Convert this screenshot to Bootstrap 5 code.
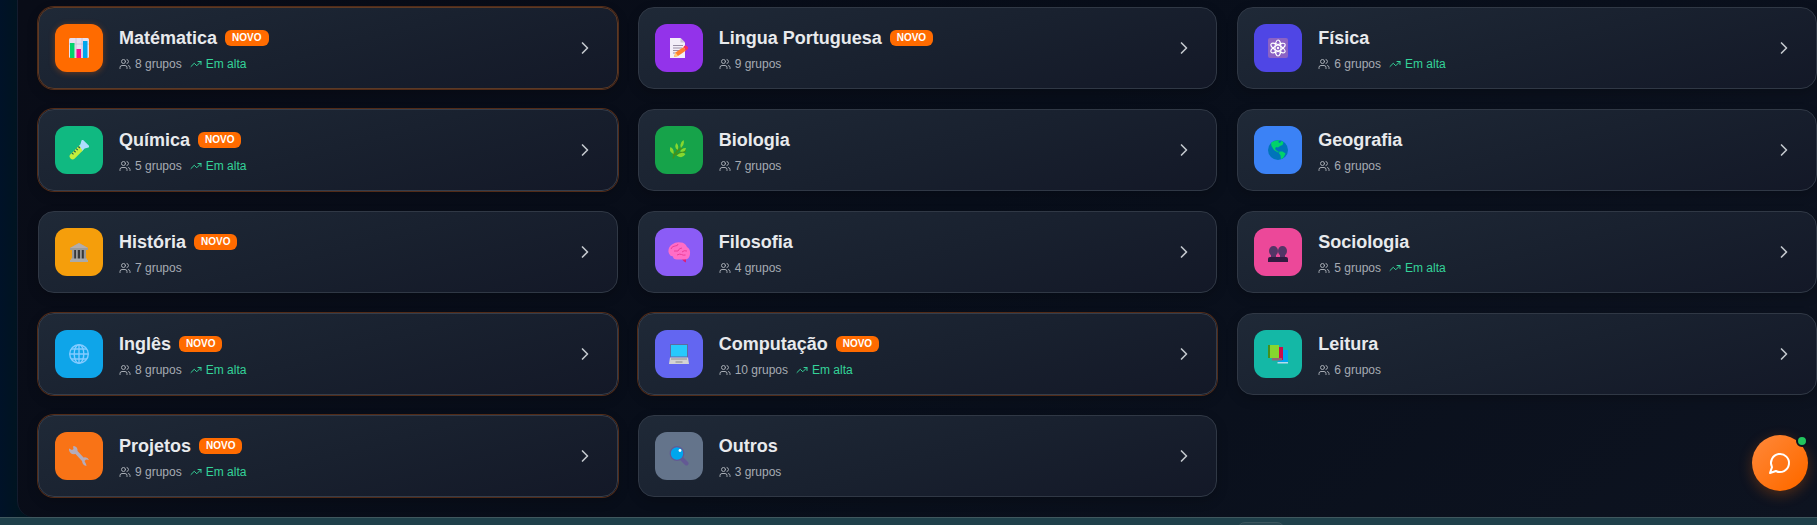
<!DOCTYPE html>
<html lang="pt-BR">
<head>
<meta charset="utf-8">
<meta name="viewport" content="width=device-width, initial-scale=1">
<title>Grupos de estudo</title>
<link href="https://cdn.jsdelivr.net/npm/bootstrap@5.3.0/dist/css/bootstrap.min.css" rel="stylesheet">
<style>
  body { background: linear-gradient(90deg, #001228 0, #00141f 20px, #00141f 100%); font-family: "Liberation Sans", Arial, sans-serif; }
  .subjects-panel { margin-left: 17px; padding: 7px 0 20px 20px; border: solid #141c2e; border-width: 0 0 0 1px; border-bottom-left-radius: 16px; background: linear-gradient(135deg, #090c17, #080e1a 50%, #0d1320); }
  .subjects-grid { display: grid; grid-template-columns: repeat(3, minmax(0, 1fr)); gap: 20px; }
  .subject { display: flex; align-items: center; gap: 16px; padding: 16px; border: 1px solid #303845; border-radius: 16px; background: linear-gradient(165deg, #1f2937, #19212f 50%, #131827); box-shadow: 0 4px 12px rgba(0, 0, 0, .2); color: #e8eaed; text-decoration: none; }
  .subject-hot { box-shadow: 0 0 0 1px #512b18, 0 4px 12px rgba(0, 0, 0, .2); border-color: #353d4a; }
  .subject-active { border-color: #5b3a26; }
  .subject-active .tile { box-shadow: 0 1px 6px rgba(255, 107, 0, .35); }
  .tile { width: 48px; height: 48px; border-radius: 12px; display: grid; place-items: center; flex: none; }
  .tile svg { width: 20px; height: 20px; }
  .subject h3 { font-size: 18px; line-height: 28px; font-weight: 700; margin: 0; }
  .tag-new { background: #ff6b00; color: #fff; font-size: 10px; line-height: 16px; font-weight: 700; padding: 0 7px; border-radius: 6px; }
  .meta { font-size: 12px; line-height: 16px; color: #a6abb3; margin-top: 4px; }
  .meta svg { width: 12px; height: 12px; }
  .rising { color: #34d399; }
  .line-icon { fill: none; stroke: currentColor; stroke-width: 2; stroke-linecap: round; stroke-linejoin: round; }
  .go { width: 32px; height: 32px; display: grid; place-items: center; color: #c3c7cd; flex: none; }
  .go svg { width: 20px; height: 20px; }
  .bottom-bar { height: 8px; background: #1f404a; border-top: 1px solid #40585e; padding: 4px 0 0 calc(68% + 1px); overflow: hidden; }
  .bottom-tab { width: 48px; height: 40px; border: 1px solid #3a555d; border-radius: 8px; background: #294751; }
  .chat { position: fixed; right: 9px; bottom: 34px; width: 56px; height: 56px; border: 0; border-radius: 50%; color: #fff; background: linear-gradient(135deg, #ff8534 10%, #ff6b00 85%); box-shadow: 0 4px 14px rgba(255, 107, 0, .28); display: grid; place-items: center; padding: 0; }
  .chat svg { width: 24px; height: 24px; }
  .chat-dot { position: absolute; top: 0; right: 0; width: 12px; height: 12px; border: 2px solid #0c1320; border-radius: 50%; background: #22c55e; }
</style>
</head>
<body class="d-flex flex-column min-vh-100 overflow-hidden">
<svg class="d-none" aria-hidden="true">
  <symbol id="users" viewBox="0 0 24 24"><path d="M16 21v-2a4 4 0 0 0-4-4H6a4 4 0 0 0-4 4v2"/><circle cx="9" cy="7" r="4"/><path d="M22 21v-2a4 4 0 0 0-3-3.870M16 3.130a4 4 0 0 1 0 7.750"/></symbol>
  <symbol id="trend" viewBox="0 0 24 24"><path d="M22 7 13.500 15.500 8.500 10.500 2 17M16 7h6v6"/></symbol>
  <symbol id="chevron" viewBox="0 0 24 24"><path d="m9 18 6-6-6-6"/></symbol>
</svg>

<main class="subjects-panel">
  <div class="subjects-grid">
    <a class="subject subject-hot subject-active" href="#matematica">
      <span class="tile" style="background:#ff6b00"><svg viewBox="0 0 20 20"><rect width="20" height="20" rx="1.500" fill="#e6dfee"/><path d="M0 6h20M7 0v20M13 0v20" stroke="#c9bdd5" stroke-width=".8"/><path d="M1 5h4.500v15H1z" fill="#00d26a"/><path d="M7.500 11H12v9H7.500z" fill="#f70a8d"/><path d="M14 3h4.500v17H14z" fill="#00a6ed"/></svg></span>
      <div class="flex-grow-1"><div class="d-flex align-items-center gap-2"><h3>Matématica</h3><span class="tag-new">NOVO</span></div>
      <div class="meta d-flex gap-2"><span class="d-flex align-items-center gap-1"><svg class="line-icon"><use href="#users"/></svg>8 grupos</span><span class="rising d-flex align-items-center gap-1"><svg class="line-icon"><use href="#trend"/></svg>Em alta</span></div></div>
      <span class="go"><svg class="line-icon"><use href="#chevron"/></svg></span>
    </a>
    <a class="subject" href="#portugues">
      <span class="tile" style="background:#9333ea"><svg viewBox="0 0 20 20"><path d="M1 0h10.500L16 4.500V20H1z" fill="#f3eef8"/><path d="M11.500 0v4.500H16z" fill="#cdc4d6"/><path d="M4 7.500h10M4 10h9M4 12.500h6M4 15h4" stroke="#998ea4"/><path d="m6.500 14.500 8-5.500 2.500 3.500-8 5.500-4 1z" fill="#ff822d"/><path d="m6.500 14.500 2.500 3.500-4 1z" fill="#ffce7c"/><path d="M14.500 9q1.500-2.500 3.800-.5t-1.300 4z" fill="#f92f60"/></svg></span>
      <div class="flex-grow-1"><div class="d-flex align-items-center gap-2"><h3>Lingua Portuguesa</h3><span class="tag-new">NOVO</span></div>
      <div class="meta d-flex gap-2"><span class="d-flex align-items-center gap-1"><svg class="line-icon"><use href="#users"/></svg>9 grupos</span></div></div>
      <span class="go"><svg class="line-icon"><use href="#chevron"/></svg></span>
    </a>
    <a class="subject" href="#fisica">
      <span class="tile" style="background:#4f46e5"><svg viewBox="0 0 20 20"><rect width="20" height="20" rx="2" fill="#8b62c5"/><g fill="none" stroke="#fff" stroke-width="1.100"><ellipse cx="10" cy="10" rx="3" ry="8"/><ellipse cx="10" cy="10" rx="3" ry="8" transform="rotate(60 10 10)"/><ellipse cx="10" cy="10" rx="3" ry="8" transform="rotate(120 10 10)"/></g><circle cx="10" cy="10" r="1.200" fill="#fff"/></svg></span>
      <div class="flex-grow-1"><h3>Física</h3>
      <div class="meta d-flex gap-2"><span class="d-flex align-items-center gap-1"><svg class="line-icon"><use href="#users"/></svg>6 grupos</span><span class="rising d-flex align-items-center gap-1"><svg class="line-icon"><use href="#trend"/></svg>Em alta</span></div></div>
      <span class="go"><svg class="line-icon"><use href="#chevron"/></svg></span>
    </a>

    <a class="subject subject-hot" href="#quimica">
      <span class="tile" style="background:#10b981"><svg viewBox="0 0 20 20"><g transform="rotate(45 10 10)"><path d="M5 0h10v1.500L13 5v4H7V5L5 1.500z" fill="#aeddff"/><path d="M7 6.500 13 8v11a3 3 0 0 1-6 0z" fill="#c3ef3c"/><path d="M7 8h2.200M7 11h2.200M7 14h2.200M7 17h2.200" stroke="#20624f" stroke-width="1.200"/></g></svg></span>
      <div class="flex-grow-1"><div class="d-flex align-items-center gap-2"><h3>Química</h3><span class="tag-new">NOVO</span></div>
      <div class="meta d-flex gap-2"><span class="d-flex align-items-center gap-1"><svg class="line-icon"><use href="#users"/></svg>5 grupos</span><span class="rising d-flex align-items-center gap-1"><svg class="line-icon"><use href="#trend"/></svg>Em alta</span></div></div>
      <span class="go"><svg class="line-icon"><use href="#chevron"/></svg></span>
    </a>
    <a class="subject" href="#biologia">
      <span class="tile" style="background:#16a34a"><svg viewBox="0 0 20 20"><path d="M4 18.500Q6 11 13 8M5 15l12-4M5 16l-2-7M8 12V6" fill="none" stroke="#44911b" stroke-width="1.400"/><g fill="#86d72f"><path d="M14.500 0q1.500 5-2.500 8-2-5 2.500-8zM7.500 3q3 3 1 7-4-3-1-7zM1.500 7q4 2 3 7-5-2-3-7zM17 8q-4-.5-6 3.500 5 1.500 6-3.500zM16.500 14q-4-3-9 1.500 6 4 9-1.500z"/></g></svg></span>
      <div class="flex-grow-1"><h3>Biologia</h3>
      <div class="meta d-flex gap-2"><span class="d-flex align-items-center gap-1"><svg class="line-icon"><use href="#users"/></svg>7 grupos</span></div></div>
      <span class="go"><svg class="line-icon"><use href="#chevron"/></svg></span>
    </a>
    <a class="subject" href="#geografia">
      <span class="tile" style="background:#3b82f6"><svg viewBox="0 0 20 20"><circle cx="10" cy="10" r="10" fill="#0074ba"/><path d="M3 3Q6 0 12 .3L10 2l2 1 1.500-2 2 1-1 3-2.500 1-2 1.500L8 7l-1 2 2 2 2 1-1 .5-4-2.500-2.500-4zM11.500 11.500h3l3 2-2 4-2.500 1.800-.5-4-1.500-2z" fill="#00d26a"/></svg></span>
      <div class="flex-grow-1"><h3>Geografia</h3>
      <div class="meta d-flex gap-2"><span class="d-flex align-items-center gap-1"><svg class="line-icon"><use href="#users"/></svg>6 grupos</span></div></div>
      <span class="go"><svg class="line-icon"><use href="#chevron"/></svg></span>
    </a>

    <a class="subject" href="#historia">
      <span class="tile" style="background:#f59e0b"><svg viewBox="0 0 20 20"><path d="M3 8h14v9H3z" fill="#383838"/><path d="M10 1 19 6v2H1V6z" fill="#9b9b9b"/><path d="M10 1 19 6H1z" fill="#b4adac"/><path d="M3 8h2.200v9H3zM7 8h1.800v9H7zM11 8h1.800v9H11zM14.800 8H17v9h-2.200z" fill="#999"/><path d="M2 16.500h16V18h1v2H1v-2h1z" fill="#aaa"/></svg></span>
      <div class="flex-grow-1"><div class="d-flex align-items-center gap-2"><h3>História</h3><span class="tag-new">NOVO</span></div>
      <div class="meta d-flex gap-2"><span class="d-flex align-items-center gap-1"><svg class="line-icon"><use href="#users"/></svg>7 grupos</span></div></div>
      <span class="go"><svg class="line-icon"><use href="#chevron"/></svg></span>
    </a>
    <a class="subject" href="#filosofia">
      <span class="tile" style="background:#8b5cf6"><svg viewBox="0 0 20 20" overflow="visible"><path d="M12 16h5v4.500l-2-1z" fill="#dd1d79"/><path d="M-.5 10Q-1 5 3 2.500 7-.5 12 .5q4 0 6 4.500 3.500 2 3 6.500 0 6-6 6H8q-4 0-4-3-4-.5-4.500-4.500z" fill="#ff6dc6"/><path d="M2 7q1-3 4-3t3-2M5 9h4q1-3 4-3M13 10q2-2 5-1M8 13q3-1.500 4.500-.5t4 .5" fill="none" stroke="#ea3a93" stroke-width=".9"/></svg></span>
      <div class="flex-grow-1"><h3>Filosofia</h3>
      <div class="meta d-flex gap-2"><span class="d-flex align-items-center gap-1"><svg class="line-icon"><use href="#users"/></svg>4 grupos</span></div></div>
      <span class="go"><svg class="line-icon"><use href="#chevron"/></svg></span>
    </a>
    <a class="subject" href="#sociologia">
      <span class="tile" style="background:#ec4899"><svg viewBox="0 0 20 20"><g fill="#533566"><ellipse cx="5.500" cy="9" rx="4.500" ry="5"/><ellipse cx="14.500" cy="9" rx="4.500" ry="5"/><path d="M3 12h5v4H3zM12 12h5v4h-5z"/></g><path d="M0 20v-3q0-2 2-2h16q2 0 2 2v3z" fill="#321b41"/></svg></span>
      <div class="flex-grow-1"><h3>Sociologia</h3>
      <div class="meta d-flex gap-2"><span class="d-flex align-items-center gap-1"><svg class="line-icon"><use href="#users"/></svg>5 grupos</span><span class="rising d-flex align-items-center gap-1"><svg class="line-icon"><use href="#trend"/></svg>Em alta</span></div></div>
      <span class="go"><svg class="line-icon"><use href="#chevron"/></svg></span>
    </a>

    <a class="subject subject-hot" href="#ingles">
      <span class="tile" style="background:#0ea5e9"><svg viewBox="0 0 20 20" fill="none" stroke="#83cbff" stroke-width="1.400"><circle cx="10" cy="10" r="9.300"/><ellipse cx="10" cy="10" rx="4.800" ry="9.300"/><path d="M10 .7v18.600M.7 10h18.600M2.300 5h15.400M2.300 15h15.400"/></svg></span>
      <div class="flex-grow-1"><div class="d-flex align-items-center gap-2"><h3>Inglês</h3><span class="tag-new">NOVO</span></div>
      <div class="meta d-flex gap-2"><span class="d-flex align-items-center gap-1"><svg class="line-icon"><use href="#users"/></svg>8 grupos</span><span class="rising d-flex align-items-center gap-1"><svg class="line-icon"><use href="#trend"/></svg>Em alta</span></div></div>
      <span class="go"><svg class="line-icon"><use href="#chevron"/></svg></span>
    </a>
    <a class="subject subject-hot" href="#computacao">
      <span class="tile" style="background:#6366f1"><svg viewBox="0 0 20 20"><path d="M1 0h18v13.500H1z" fill="#5e6b9e"/><path d="M2 1h16v11.500H2z" fill="#26c9fc"/><path d="M1 13.500h18l1 6.500H0z" fill="#d3d3d3"/><path d="M2 15h16" stroke="#9b9b9b" stroke-width="1.200"/><path d="M6.500 18h7" stroke="#888"/></svg></span>
      <div class="flex-grow-1"><div class="d-flex align-items-center gap-2"><h3>Computação</h3><span class="tag-new">NOVO</span></div>
      <div class="meta d-flex gap-2"><span class="d-flex align-items-center gap-1"><svg class="line-icon"><use href="#users"/></svg>10 grupos</span><span class="rising d-flex align-items-center gap-1"><svg class="line-icon"><use href="#trend"/></svg>Em alta</span></div></div>
      <span class="go"><svg class="line-icon"><use href="#chevron"/></svg></span>
    </a>
    <a class="subject" href="#leitura">
      <span class="tile" style="background:#14b8a6"><svg viewBox="0 0 20 20"><path d="M13 6h7v12H10z" fill="#00a6ed"/><path d="M9.500 18H20v1.500H9.500z" fill="#b4dbed"/><path d="M9 3h6v13H6z" fill="#ca0b4a"/><path d="M4 14h10v2.500H4z" fill="#8f6976"/><path d="M0 1h2v13H0z" fill="#44911b"/><path d="M2 1h9v13H2z" fill="#86d72f"/></svg></span>
      <div class="flex-grow-1"><h3>Leitura</h3>
      <div class="meta d-flex gap-2"><span class="d-flex align-items-center gap-1"><svg class="line-icon"><use href="#users"/></svg>6 grupos</span></div></div>
      <span class="go"><svg class="line-icon"><use href="#chevron"/></svg></span>
    </a>

    <a class="subject subject-hot" href="#projetos">
      <span class="tile" style="background:#f97316"><svg viewBox="0 0 20 20"><path d="M0 4v-1.500l3 1.500 1.500-1L4 .5 5 0q4 1 3.500 5l6 6.500q4-1 5.500 2.500l-3-.5-1.500 1.500 1.500 3 .5 2q-4-.5-4.500-5L6.500 8Q1 9 0 4z" fill="#b4acbc"/></svg></span>
      <div class="flex-grow-1"><div class="d-flex align-items-center gap-2"><h3>Projetos</h3><span class="tag-new">NOVO</span></div>
      <div class="meta d-flex gap-2"><span class="d-flex align-items-center gap-1"><svg class="line-icon"><use href="#users"/></svg>9 grupos</span><span class="rising d-flex align-items-center gap-1"><svg class="line-icon"><use href="#trend"/></svg>Em alta</span></div></div>
      <span class="go"><svg class="line-icon"><use href="#chevron"/></svg></span>
    </a>
    <a class="subject" href="#outros">
      <span class="tile" style="background:#64748b"><svg viewBox="0 0 20 20"><path d="m12 12 5.500 5.500" stroke="#635994" stroke-width="4" stroke-linecap="round"/><circle cx="8" cy="7.500" r="6.800" fill="#00a6ed" stroke="#635994" stroke-width="1.200"/><circle cx="11" cy="4.500" r="1.400" fill="#fff"/></svg></span>
      <div class="flex-grow-1"><h3>Outros</h3>
      <div class="meta d-flex gap-2"><span class="d-flex align-items-center gap-1"><svg class="line-icon"><use href="#users"/></svg>3 grupos</span></div></div>
      <span class="go"><svg class="line-icon"><use href="#chevron"/></svg></span>
    </a>
  </div>
</main>

<footer class="bottom-bar flex-grow-1"><div class="bottom-tab"></div></footer>

<button class="chat" type="button" aria-label="Abrir chat">
  <svg class="line-icon" viewBox="0 0 24 24"><path d="M7.900 20A9 9 0 1 0 4 16.100L2 22Z"/></svg>
  <span class="chat-dot"></span>
</button>
<script src="https://cdn.jsdelivr.net/npm/bootstrap@5.3.0/dist/js/bootstrap.bundle.min.js"></script>
</body>
</html>
